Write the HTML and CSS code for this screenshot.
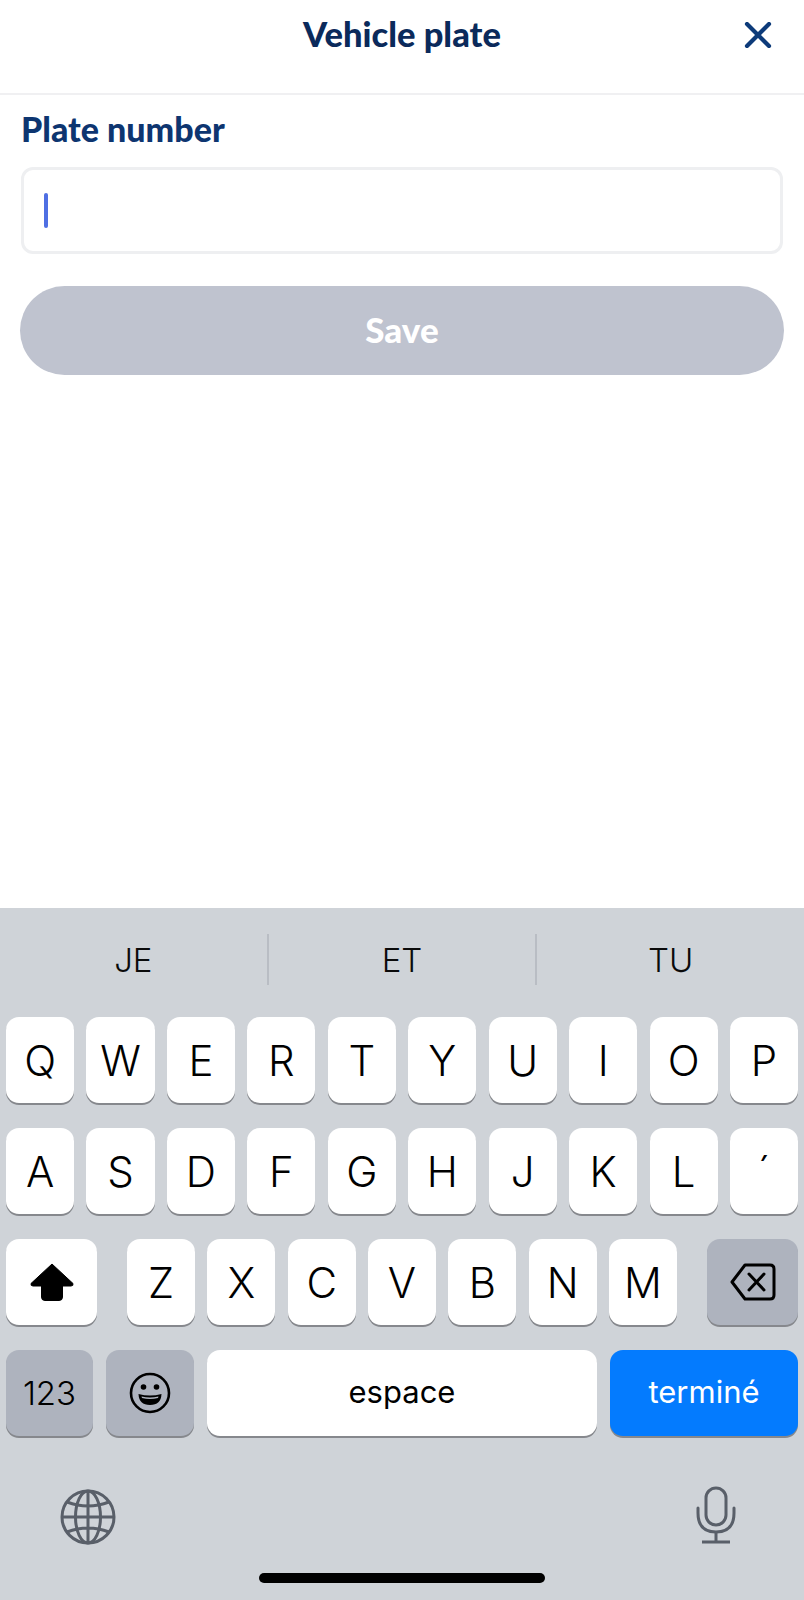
FILE: index.html
```html
<!DOCTYPE html>
<html lang="en">
<head>
    <meta charset="UTF-8">
    <meta name="viewport" content="width=device-width, initial-scale=1.0">
    <title>Vehicle plate</title>
    <link rel="stylesheet" href="styles.css">
</head>
<body>

<div class="screen">
    <header class="top-bar">
        <h1>Vehicle plate</h1>
        <svg class="close-icon" width="28" height="26" viewBox="0 0 28 26">
            <path d="M3 2 L25 24 M25 2 L3 24" fill="none" stroke="#0d3b7a" stroke-width="4.200" stroke-linecap="round"/>
        </svg>
    </header>

    <div class="form">
        <label class="field-label">Plate number</label>
        <div class="plate-input"><span class="caret"></span></div>
        <button class="save-button">Save</button>
    </div>

    <div class="keyboard">
        <div class="suggestions">
            <div class="suggestion">JE</div>
            <div class="suggestion">ET</div>
            <div class="suggestion">TU</div>
        </div>

        <div class="key-row">
            <div class="key">Q</div>
            <div class="key">W</div>
            <div class="key">E</div>
            <div class="key">R</div>
            <div class="key">T</div>
            <div class="key">Y</div>
            <div class="key">U</div>
            <div class="key">I</div>
            <div class="key">O</div>
            <div class="key">P</div>
        </div>

        <div class="key-row">
            <div class="key">A</div>
            <div class="key">S</div>
            <div class="key">D</div>
            <div class="key">F</div>
            <div class="key">G</div>
            <div class="key">H</div>
            <div class="key">J</div>
            <div class="key">K</div>
            <div class="key">L</div>
            <div class="key">´</div>
        </div>

        <div class="key-row key-row-split">
            <div class="key key-wide">
                <svg width="44" height="38" viewBox="0 0 44 38">
                    <path d="M22 1 L43 20.5 Q43.500 23 41 23 L32.500 23 L32.500 34 Q32.500 37.500 29 37.500 L15 37.500 Q11.500 37.500 11.500 34 L11.500 23 L3 23 Q0.500 23 1 20.500 Z" fill="#000" stroke="#000" stroke-linejoin="round"/>
                </svg>
            </div>
            <div class="letter-group">
                <div class="key">Z</div>
                <div class="key">X</div>
                <div class="key">C</div>
                <div class="key">V</div>
                <div class="key">B</div>
                <div class="key">N</div>
                <div class="key">M</div>
            </div>
            <div class="key key-wide key-dark">
                <svg width="46" height="38" viewBox="0 0 46 38">
                    <path d="M15 2 L40 2 Q44 2 44 6 L44 32 Q44 36 40 36 L15 36 L2 19 Z" fill="none" stroke="#000" stroke-width="3" stroke-linejoin="round"/>
                    <path d="M19 11 L34 27 M34 11 L19 27" fill="none" stroke="#000" stroke-width="3" stroke-linecap="round"/>
                </svg>
            </div>
        </div>

        <div class="key-row key-row-bottom">
            <div class="key key-dark key-small-text key-123">123</div>
            <div class="key key-dark key-emoji">
                <svg width="42" height="42" viewBox="0 0 42 42">
                    <circle cx="21" cy="21" r="19" fill="none" stroke="#000" stroke-width="2.600"/>
                    <circle cx="14.500" cy="15" r="2.800" fill="#000"/>
                    <circle cx="27.500" cy="15" r="2.800" fill="#000"/>
                    <path d="M9.500 22 Q21 25 32.500 22 Q32 33 21 33 Q10 33 9.500 22 Z" fill="#000"/>
                    <path d="M12.500 24.500 Q21 26.500 29.500 24.500 L29 26 Q21 28 13 26 Z" fill="#aeb3be"/>
                </svg>
            </div>
            <div class="key key-small-text key-space">espace</div>
            <div class="key key-small-text key-done">terminé</div>
        </div>

        <div class="system-row">
            <svg width="56" height="56" viewBox="0 0 56 56" fill="none" stroke="#595f69" stroke-width="3">
                <circle cx="28" cy="28" r="26"/>
                <ellipse cx="28" cy="28" rx="12.500" ry="26"/>
                <path d="M28 2 L28 54 M2 28 L54 28 M7 13 Q28 21 49 13 M7 43 Q28 35 49 43"/>
            </svg>
            <svg class="mic-icon" width="40" height="58" viewBox="0 0 40 58" fill="none" stroke="#595f69" stroke-width="3">
                <rect x="10" y="2" width="20" height="37" rx="10"/>
                <path d="M2 22 L2 27 Q2 46 20 46 Q38 46 38 27 L38 22" stroke-linecap="round"/>
                <path d="M20 46 L20 56 M6 56 L34 56"/>
            </svg>
        </div>

        <div class="home-bar"></div>
    </div>
</div>

</body>
</html>
```

FILE: styles.css
```css
body {
    margin: 0;
    background-color: #ffffff;
    font-family: 'Inter', 'Liberation Sans', sans-serif;
}
.screen {
    display: flex;
    flex-direction: column;
    height: 1600px;
}
.top-bar {
    display: flex;
    justify-content: center;
    height: 93px;
    border-bottom: 2px solid #f0f0f2;
    position: relative;
}
.top-bar h1 {
    margin: 14px 0 0;
    font-family: 'Lato', sans-serif;
    font-size: 34.500px;
    line-height: 40px;
    font-weight: 900;
    color: #0b2a5b;
}
.close-icon {
    position: absolute;
    top: 22px;
    right: 32px;
}
.form {
    display: flex;
    flex-direction: column;
    padding: 0 20px;
}
.field-label {
    margin: 14px 0 0 1px;
    font-family: 'Lato', sans-serif;
    font-size: 34px;
    line-height: 40px;
    font-weight: 900;
    color: #0d3570;
}
.plate-input {
    display: flex;
    align-items: center;
    box-sizing: border-box;
    height: 87px;
    margin: 18px 1px 0;
    padding-left: 20px;
    border: 3px solid #eeeff1;
    border-radius: 12px;
}
.caret {
    width: 4px;
    height: 35px;
    border-radius: 2px;
    background-color: #4f6fe3;
}
.save-button {
    height: 89px;
    margin-top: 32px;
    padding-bottom: 5px;
    border: none;
    border-radius: 45px;
    background-color: #bfc3cf;
    color: #ffffff;
    font-family: 'Lato', sans-serif;
    font-size: 35px;
    font-weight: 900;
}
.keyboard {
    margin-top: auto;
    height: 692px;
    background-color: #cfd3d8;
    position: relative;
}
.suggestions {
    display: flex;
    height: 51px;
    padding-top: 26px;
    margin-bottom: 32px;
}
.suggestion {
    flex: 1;
    display: flex;
    align-items: center;
    justify-content: center;
    font-size: 33px;
    font-weight: 350;
    color: #0a0a0a;
    border-left: 2px solid #b9bdc4;
}
.suggestion:first-child {
    border-left: none;
}
.key-row {
    display: flex;
    gap: 12.300px;
    padding: 0 6px;
    margin-bottom: 25px;
}
.key-row-split {
    justify-content: space-between;
}
.key-row-bottom {
    gap: 13px;
}
.letter-group {
    display: flex;
    gap: 12.300px;
}
.key {
    display: flex;
    flex: 1;
    align-items: center;
    justify-content: center;
    height: 86px;
    border-radius: 13px;
    background-color: #ffffff;
    box-shadow: 0 2px 0 #86888d;
    color: #000000;
    font-size: 42px;
    font-weight: 350;
}
.letter-group .key {
    flex: none;
    width: 68px;
}
.key-row-split > .key-wide {
    flex: none;
    width: 91px;
}
.key-dark {
    background-color: #aeb3be;
}
.key-small-text {
    font-size: 31px;
    font-weight: 400;
}
.key-row-bottom .key {
    flex: none;
}
.key-123 {
    width: 87px;
    font-size: 33px;
    font-weight: 300;
}
.key-emoji {
    width: 88px;
}
.key-space {
    width: 390px;
    padding-bottom: 3px;
    box-sizing: border-box;
}
.key-done {
    width: 188px;
    padding-bottom: 3px;
    box-sizing: border-box;
    background-color: #047bfe;
    color: #ffffff;
}
.system-row {
    display: flex;
    justify-content: space-between;
    padding: 28px 68px 0 60px;
}
.mic-icon {
    margin-top: -3px;
}
.home-bar {
    position: absolute;
    left: 259px;
    bottom: 17px;
    width: 286px;
    height: 10px;
    border-radius: 5px;
    background-color: #000000;
}
```
